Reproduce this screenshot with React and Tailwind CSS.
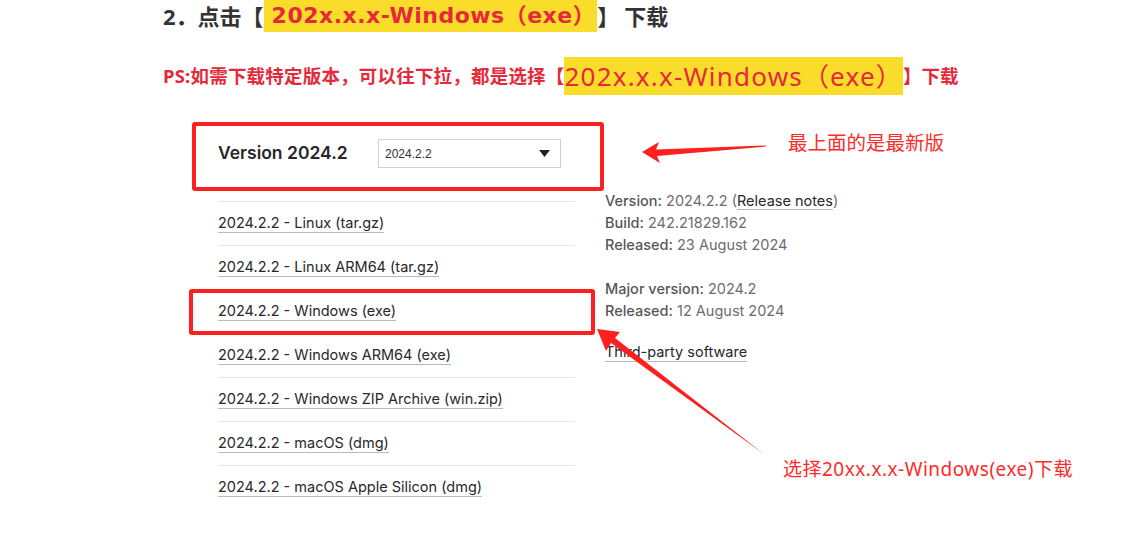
const downloads = [
  "2024.2.2 - Linux (tar.gz)",
  "2024.2.2 - Linux ARM64 (tar.gz)",
  "2024.2.2 - Windows (exe)",
  "2024.2.2 - Windows ARM64 (exe)",
  "2024.2.2 - Windows ZIP Archive (win.zip)",
  "2024.2.2 - macOS (dmg)",
  "2024.2.2 - macOS Apple Silicon (dmg)",
];

const cjk = "font-['Noto_Sans','Noto_Sans_CJK_SC',sans-serif]";

const InfoLine = ({ label, value, children }) => (
  <div className="h-[22px] leading-[22px] whitespace-nowrap">
    <span className="font-medium text-[#55565a]">{label}</span>
    <span className="text-[#6c6d70]"> {value}</span>
    {children}
  </div>
);

export default function App() {
  return (
    <div className="relative w-[1132px] h-[546px] overflow-hidden bg-white">
      {/* step heading */}
      <h1 className={`${cjk} flex h-[32px] items-center pl-[163px] text-[22px] font-bold leading-[32px] text-[#333333] whitespace-nowrap`}>
        <span>2．点击【</span>
        <span className="flex h-[32px] items-center bg-[#fadd2a] pl-[8px] pr-[2px] font-['DejaVu_Sans','Noto_Sans_CJK_SC',sans-serif] tracking-[0.5px] text-[#e6283b]">
          202x.x.x-Windows（exe）
        </span>
        <span>】</span>
        <span className="pl-[5px]">下载</span>
      </h1>

      {/* PS line */}
      <div className={`${cjk} mt-[25px] flex h-[38px] items-center pl-[163px] whitespace-nowrap text-[#e6283b]`}>
        <span className="text-[18.5px] font-bold tracking-[0.2px]">PS:如需下载特定版本，可以往下拉，都是选择【</span>
        <span className="flex h-[38px] items-center bg-[#fadd2a] text-[26px] font-normal tracking-[1.2px]">202x.x.x-Windows（exe）</span>
        <span className="text-[18.5px] font-bold">】下载</span>
      </div>

      {/* download page */}
      <div className="pl-[218px] font-['Inter',sans-serif] text-[#27282c]">
        <div className="mt-[44px] flex h-[29px] items-center">
          <div className="w-[160px] text-[17.5px] font-semibold">Version 2024.2</div>
          <div className="flex h-[29px] w-[183px] items-center justify-between border border-[#d2d2d2] pl-[6px] pr-[10px] font-['Liberation_Sans',sans-serif] text-[12px] text-[#333]">
            <span>2024.2.2</span>
            <svg width="11" height="7" viewBox="0 0 11 7">
              <path d="M0 0h11L5.5 7z" fill="#222" />
            </svg>
          </div>
        </div>

        <div className="mt-[33px] flex">
          <ul className="w-[357px]">
            {downloads.map((d) => (
              <li key={d} className="flex h-[44px] items-center border-t border-[#e6e6e6] text-[14.5px]">
                <span className="border-b border-[#b9b9bb] leading-[18px]">{d}</span>
              </li>
            ))}
          </ul>

          <div className="ml-[30px] -mt-[11px] text-[14.5px]">
            <InfoLine label="Version:" value="2024.2.2 (">
              <span className="border-b border-[#b9b9bb] text-[#27282c]">Release notes</span>
              <span className="text-[#6c6d70]">)</span>
            </InfoLine>
            <InfoLine label="Build:" value="242.21829.162" />
            <InfoLine label="Released:" value="23 August 2024" />
            <div className="h-[22px]" />
            <InfoLine label="Major version:" value="2024.2" />
            <InfoLine label="Released:" value="12 August 2024" />
            <div className="mt-[19px] h-[22px] leading-[22px]">
              <span className="border-b border-[#b9b9bb] pb-[1px]">Third-party software</span>
            </div>
          </div>
        </div>
      </div>

      {/* annotations */}
      <div className="pointer-events-none absolute left-[192px] top-[122px] h-[69px] w-[412px] rounded-[3px] border-[4px] border-[#fe1f1f]" />
      <div className="pointer-events-none absolute left-[189px] top-[289px] h-[46px] w-[406px] rounded-[3px] border-[4px] border-[#fe1f1f]" />

      <svg className="pointer-events-none absolute left-0 top-0" width="1132" height="546" viewBox="0 0 1132 546">
        <polygon points="642,152 659,142 656,149.5 766,145.5 766,146.5 657,156 660,163" fill="#fe1f1f" />
        <polygon points="597,329 620,332 615,338 765,455 611,343 606,351" fill="#fe1f1f" />
      </svg>

      <div className={`${cjk} absolute left-[788px] top-[130px] text-[19.5px] leading-[26px] text-[#fe2b2b] whitespace-nowrap`}>
        最上面的是最新版
      </div>
      <div className={`${cjk} absolute left-[783px] top-[456px] text-[19px] leading-[26px] tracking-[0.5px] text-[#fe2b2b] whitespace-nowrap`}>
        选择20xx.x.x-Windows(exe)下载
      </div>
    </div>
  );
}
